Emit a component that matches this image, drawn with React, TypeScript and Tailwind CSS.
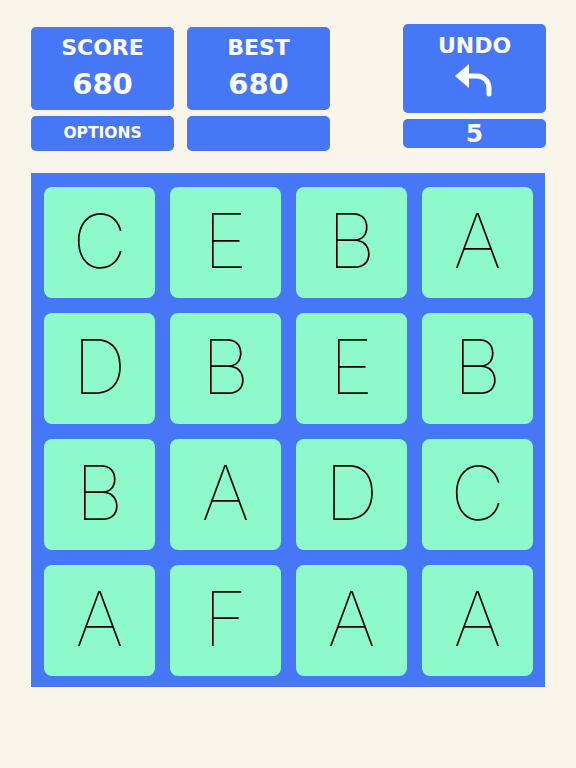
import React from "react";

const BLUE = "bg-[#4677f7]";
const tiles = ["C", "E", "B", "A", "D", "B", "E", "B", "B", "A", "D", "C", "A", "F", "A", "A"];

function UndoArrow() {
  return (
    <svg width="40" height="36" viewBox="0 0 40 36" fill="none">
      <path d="M2 14 L16 2 L16 26 Z" fill="white" />
      <path d="M14 14 H24 A12 12 0 0 1 36 26 V32" stroke="white" strokeWidth="5" strokeLinecap="round" />
    </svg>
  );
}

export default function App() {
  return (
    <div
      className="h-[768px] w-[576px] bg-[#f9f5eb] text-white"
      style={{ fontFamily: '"DejaVu Sans", Verdana, sans-serif' }}
    >
      <div className="flex pl-[31px] pt-[24px]">
        <div className="mt-[3px] flex w-[143px] flex-col gap-[6px]">
          <div className={`flex h-[83px] flex-col items-center rounded-[5px] ${BLUE} pt-[8px]`}>
            <span className="text-[22px] font-bold leading-[26px]">SCORE</span>
            <span className="mt-[6px] text-[29px] font-bold leading-[34px]">680</span>
          </div>
          <div className={`flex h-[35px] items-center justify-center rounded-[5px] ${BLUE}`}>
            <span className="text-[15.5px] font-bold">OPTIONS</span>
          </div>
        </div>
        <div className="ml-[13px] mt-[3px] flex w-[143px] flex-col gap-[6px]">
          <div className={`flex h-[83px] flex-col items-center rounded-[5px] ${BLUE} pt-[8px]`}>
            <span className="text-[22px] font-bold leading-[26px]">BEST</span>
            <span className="mt-[6px] text-[29px] font-bold leading-[34px]">680</span>
          </div>
          <div className={`h-[35px] rounded-[5px] ${BLUE}`} />
        </div>
        <div className="ml-[73px] flex w-[143px] flex-col gap-[6px]">
          <div className={`flex h-[89px] flex-col items-center rounded-[5px] ${BLUE} pt-[9px]`}>
            <span className="text-[22px] font-bold leading-[26px]">UNDO</span>
            <div className="mr-[4px] mt-[3px]">
              <UndoArrow />
            </div>
          </div>
          <div className={`flex h-[29px] items-center justify-center rounded-[5px] ${BLUE}`}>
            <span className="text-[25px] font-bold leading-none">5</span>
          </div>
        </div>
      </div>

      <div
        className={`ml-[31px] mt-[22px] grid h-[514px] w-[514px] grid-cols-4 grid-rows-4 gap-[15px] ${BLUE} pb-[11px] pl-[13px] pr-[12px] pt-[14px]`}
      >
        {tiles.map((t, i) => (
          <div
            key={i}
            className="flex items-center justify-center rounded-[8px] bg-[#8efacb] pb-[5px] text-black"
          >
            <span
              className="text-[75px] font-thin leading-none"
              style={{ fontFamily: "Inter, Lato, sans-serif" }}
            >
              {t}
            </span>
          </div>
        ))}
      </div>
    </div>
  );
}
